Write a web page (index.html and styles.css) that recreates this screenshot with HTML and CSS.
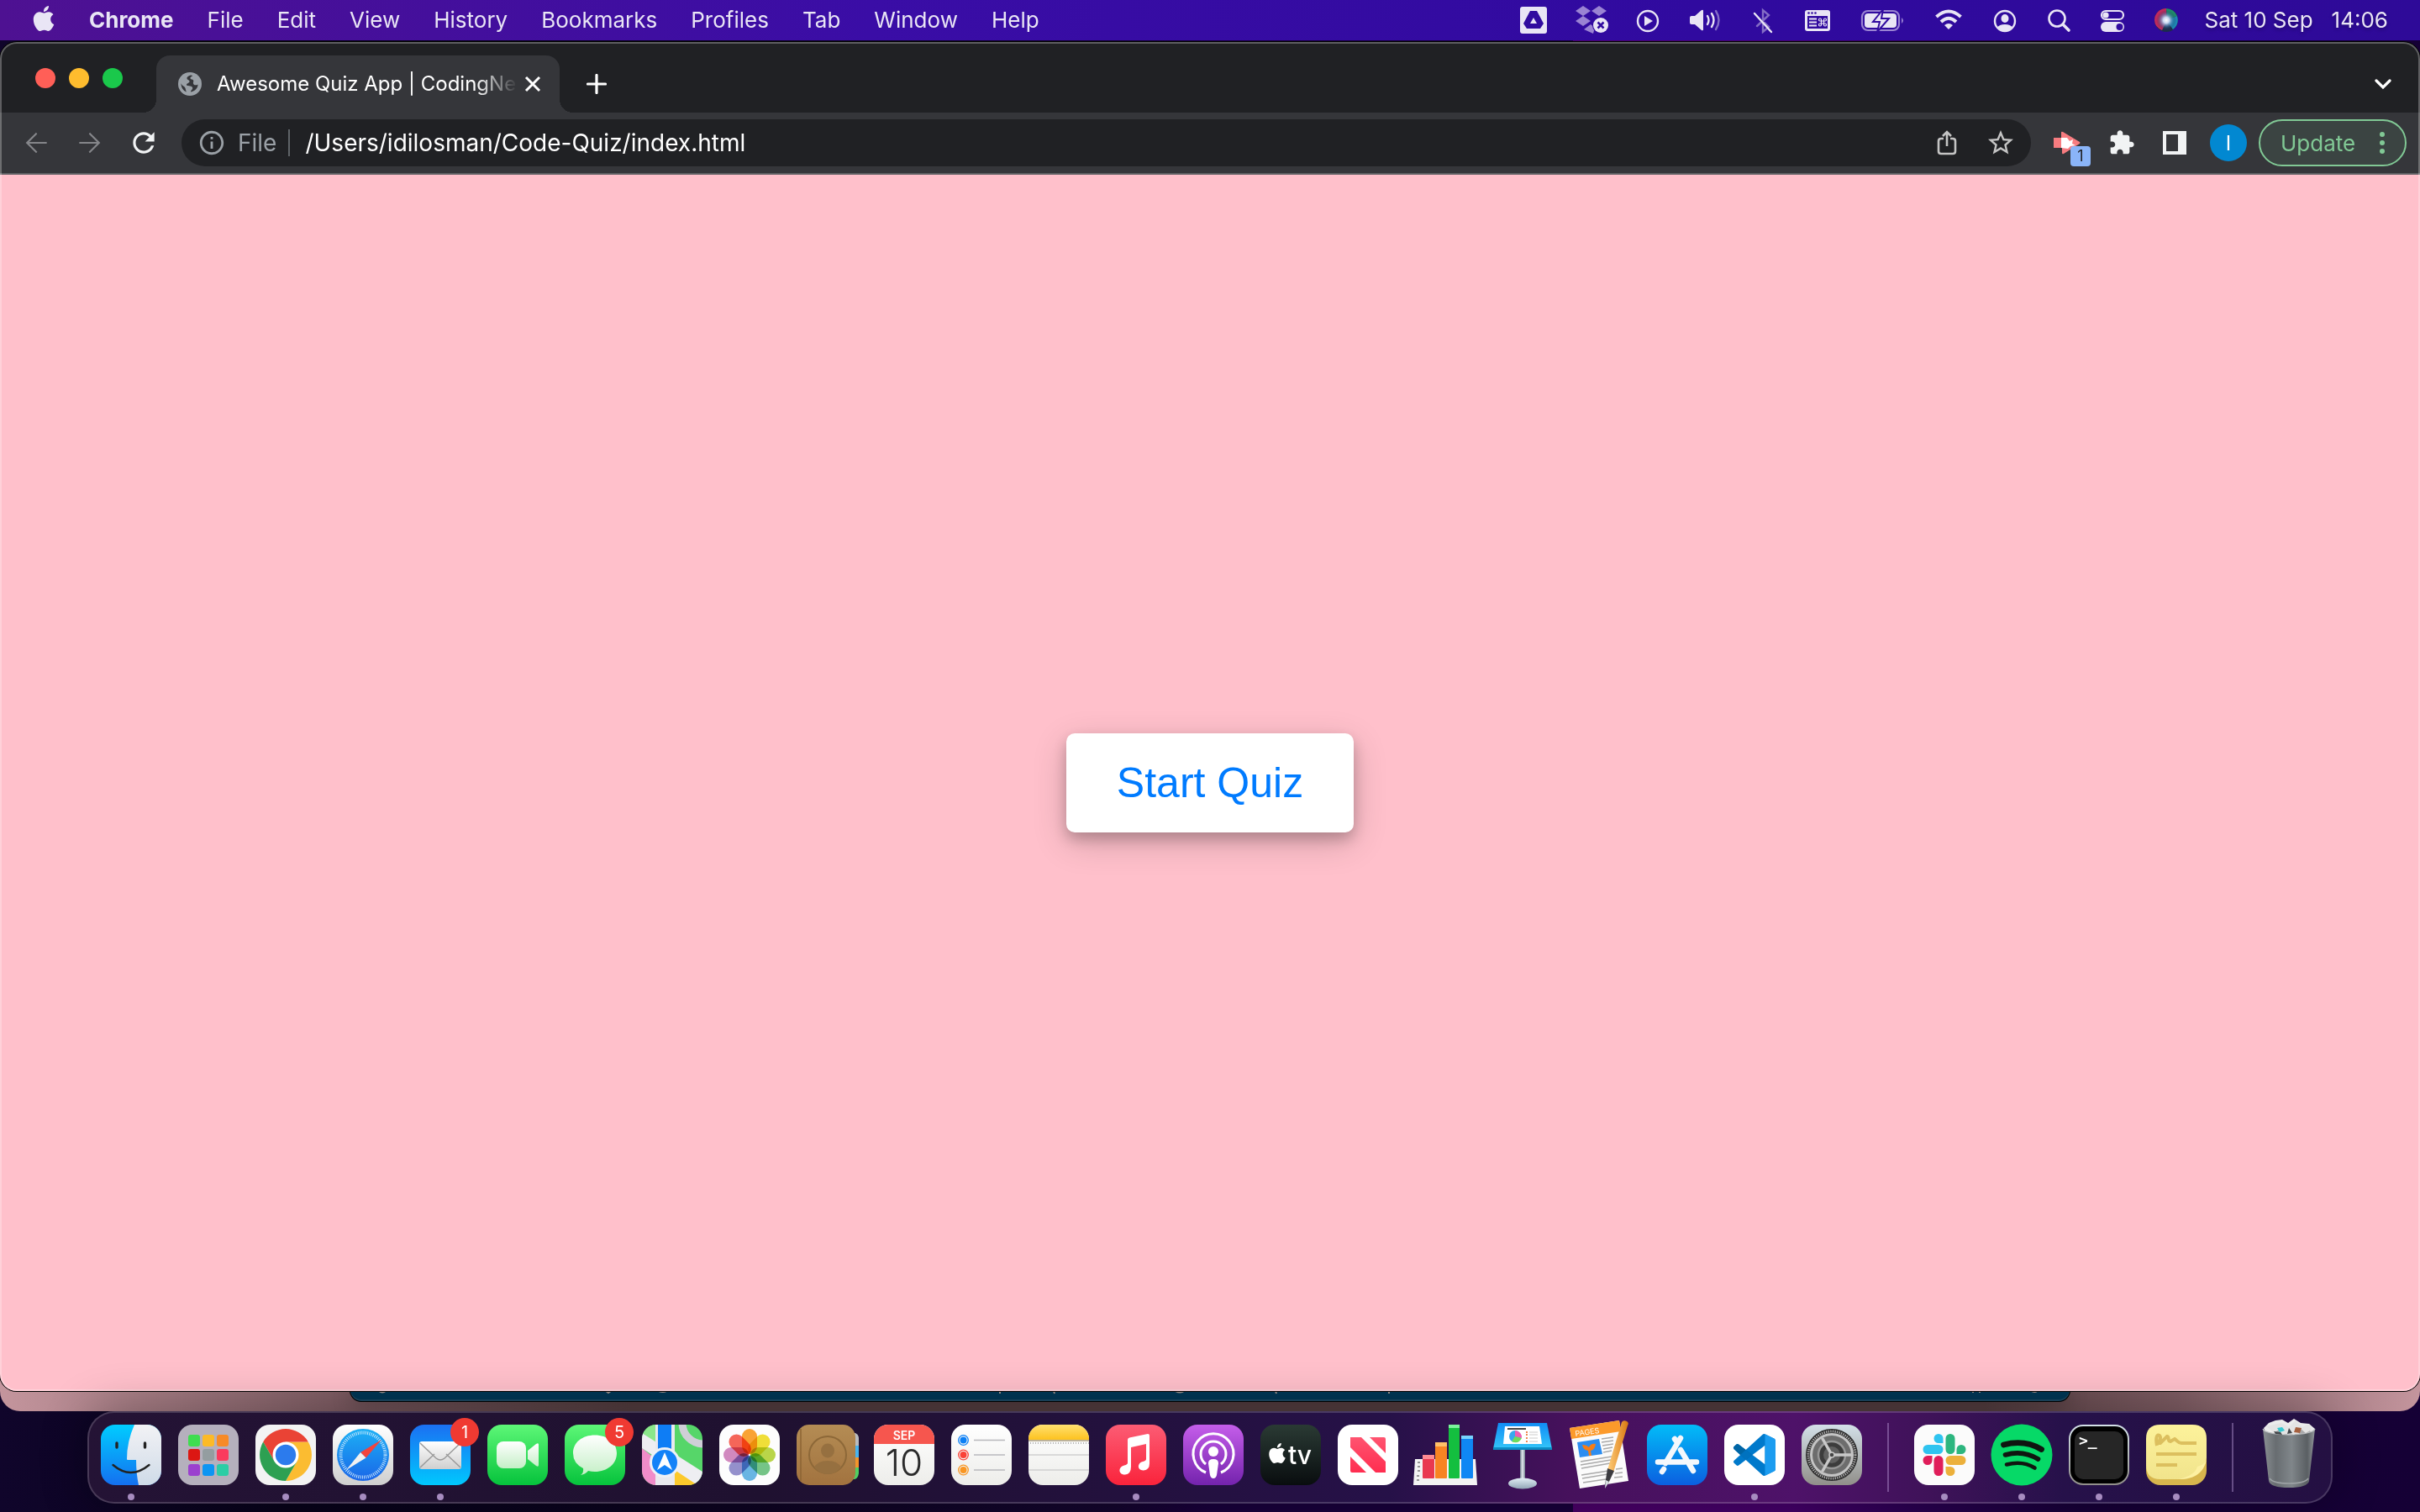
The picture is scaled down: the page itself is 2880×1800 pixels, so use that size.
FILE: index.html
```html
<!DOCTYPE html>
<html lang="en">
<head>
<meta charset="utf-8">
<title>Awesome Quiz App</title>
<link rel="stylesheet" href="styles.css">
</head>
<body>
<svg class="defs" aria-hidden="true">
  <defs>
    <linearGradient id="g-finder" x2="0" y2="1"><stop offset="0" stop-color="#00cdff"/><stop offset="1" stop-color="#1470f0"/></linearGradient>
    <linearGradient id="g-face" x2="0" y2="1"><stop offset="0" stop-color="#f2f2f5"/><stop offset="1" stop-color="#cfdbe8"/></linearGradient>
    <linearGradient id="g-white" x2="0" y2="1"><stop offset="0" stop-color="#ffffff"/><stop offset="1" stop-color="#ededea"/></linearGradient>
    <linearGradient id="g-silver" x2="0" y2="1"><stop offset="0" stop-color="#ffffff"/><stop offset="1" stop-color="#cfcfcf"/></linearGradient>
    <linearGradient id="g-safari" x2="0" y2="1"><stop offset="0" stop-color="#1cb0f5"/><stop offset="1" stop-color="#1a66e8"/></linearGradient>
    <linearGradient id="g-mail" x2="0" y2="1"><stop offset="0" stop-color="#1b70f2"/><stop offset="1" stop-color="#00c8fe"/></linearGradient>
    <linearGradient id="g-green" x2="0" y2="1"><stop offset="0" stop-color="#5df777"/><stop offset="1" stop-color="#06c33c"/></linearGradient>
    <linearGradient id="g-bubble" x2="0" y2="1"><stop offset="0" stop-color="#ffffff"/><stop offset="1" stop-color="#c4efc6"/></linearGradient>
    <linearGradient id="g-brown" x2="0" y2="1"><stop offset="0" stop-color="#b48c54"/><stop offset="1" stop-color="#a2733f"/></linearGradient>
    <linearGradient id="g-notes" x2="0" y2="1"><stop offset="0" stop-color="#ffe070"/><stop offset="1" stop-color="#fdc21f"/></linearGradient>
    <linearGradient id="g-music" x2="0" y2="1"><stop offset="0" stop-color="#fc5c74"/><stop offset="1" stop-color="#fa233b"/></linearGradient>
    <linearGradient id="g-pod" x2="0" y2="1"><stop offset="0" stop-color="#c55eea"/><stop offset="1" stop-color="#7423ad"/></linearGradient>
    <linearGradient id="g-tv" x2="0" y2="1"><stop offset="0" stop-color="#2a3a34"/><stop offset="1" stop-color="#090d0f"/></linearGradient>
    <linearGradient id="g-news" x2="0" y2="1"><stop offset="0" stop-color="#ff5470"/><stop offset="1" stop-color="#ff2d50"/></linearGradient>
    <linearGradient id="g-store" x2="0" y2="1"><stop offset="0" stop-color="#02bcf8"/><stop offset="1" stop-color="#0b5fe0"/></linearGradient>
    <linearGradient id="g-gear" x2="0" y2="1"><stop offset="0" stop-color="#d3e0e8"/><stop offset="1" stop-color="#918f8a"/></linearGradient>
    <linearGradient id="g-keynote" x2="0" y2="1"><stop offset="0" stop-color="#118df5"/><stop offset="1" stop-color="#34c6f9"/></linearGradient>
    <linearGradient id="g-metal"><stop offset="0" stop-color="#6f7f8c"/><stop offset=".5" stop-color="#e8edf1"/><stop offset="1" stop-color="#6f7f8c"/></linearGradient>
    <linearGradient id="g-base" x2="0" y2="1"><stop offset="0" stop-color="#e2eef5"/><stop offset="1" stop-color="#91a6b6"/></linearGradient>
    <linearGradient id="g-pen"><stop offset="0" stop-color="#ffce7a"/><stop offset="1" stop-color="#d97710"/></linearGradient>
    <linearGradient id="g-sticky" x2="0" y2="1"><stop offset="0" stop-color="#fdf29b"/><stop offset="1" stop-color="#f1e48c"/></linearGradient>
    <linearGradient id="g-can"><stop offset="0" stop-color="#8b9094"/><stop offset=".25" stop-color="#686d71"/><stop offset=".55" stop-color="#80868a"/><stop offset=".85" stop-color="#5a5f63"/><stop offset="1" stop-color="#93989c"/></linearGradient>
    <radialGradient id="g-siri" cx=".5" cy=".5" r=".5"><stop offset="0" stop-color="#ffffff"/><stop offset=".3" stop-color="#c9d6f0"/><stop offset=".65" stop-color="#4a7fb0" stop-opacity=".5"/><stop offset="1" stop-color="#123" stop-opacity="0"/></radialGradient>
    <clipPath id="tile"><rect width="72" height="72" rx="17"/></clipPath>
    <path id="apple" d="M12.152 6.896c-.948 0-2.415-1.078-3.96-1.04-2.04.027-3.91 1.183-4.961 3.014-2.117 3.675-.546 9.103 1.519 12.09 1.013 1.454 2.208 3.09 3.792 3.039 1.52-.065 2.09-.987 3.935-.987 1.831 0 2.35.987 3.96.948 1.637-.026 2.676-1.48 3.676-2.948 1.156-1.688 1.636-3.325 1.662-3.415-.039-.013-3.182-1.221-3.22-4.857-.026-3.04 2.48-4.494 2.597-4.559-1.429-2.09-3.623-2.324-4.39-2.376-2-.156-3.675 1.09-4.61 1.09zM15.53 3.83c.843-1.012 1.4-2.427 1.245-3.83-1.207.052-2.662.805-3.532 1.818-.78.896-1.454 2.338-1.273 3.714 1.338.104 2.715-.688 3.559-1.701"/>
  </defs>
</svg>

<header class="menubar">
  <nav class="menus" aria-label="Menu bar">
    <button class="menu apple" aria-label="Apple"><svg width="28" height="30" viewBox="0 0 24 24" fill="currentColor" preserveAspectRatio="xMidYMid slice"><use href="#apple"/></svg></button>
    <button class="menu app-name">Chrome</button>
    <button class="menu">File</button>
    <button class="menu">Edit</button>
    <button class="menu">View</button>
    <button class="menu">History</button>
    <button class="menu">Bookmarks</button>
    <button class="menu">Profiles</button>
    <button class="menu">Tab</button>
    <button class="menu">Window</button>
    <button class="menu">Help</button>
  </nav>
  <div class="status">
    <svg width="36" height="32" viewBox="0 0 36 32"><rect x="2" width="32" height="32" rx="3" fill="#e9e5f5"/><path d="M14 5h8l8 15-4 6H10l-4-6z" fill="#310b9f"/><path d="M18 13l4 7h-8z" fill="#e9e5f5"/></svg>
    <svg width="42" height="34" viewBox="0 0 42 34"><g fill="#9a83d3"><path d="M11 0l9 6-9 6-9-6zM30 0l9 6-9 6-9-6zM11 12l9 6-9 6-9-6zM12 28l8-6 5 4-2 7z"/></g><circle cx="32" cy="23" r="10" fill="#310b9f"/><circle cx="32" cy="23" r="9" fill="#e9e5f5"/><path d="M28.500 19.500l7 7m0-7l-7 7" stroke="#310b9f" stroke-width="2.500"/></svg>
    <svg width="32" height="32" viewBox="0 0 32 32"><circle cx="16" cy="17" r="12" fill="none" stroke="currentColor" stroke-width="2.400"/><path d="M12 11l10 6-10 6z" fill="currentColor"/></svg>
    <svg width="44" height="32" viewBox="0 0 44 32" fill="none" stroke="currentColor" stroke-width="2.400" stroke-linecap="round"><path d="M4 13q0-2 2-2h4l8-7q2-1 2 1v22q0 2-2 1l-8-7H6q-2 0-2-2z" fill="currentColor" stroke="none"/><path d="M25 11q3 5 0 10M30 8q5 8 0 16"/><path d="M35 5q7 11 0 22" opacity=".45"/></svg>
    <svg width="34" height="32" viewBox="0 0 34 32" fill="none" stroke="currentColor" stroke-width="2.400" stroke-linecap="round"><path d="M10 23l14-13-7-6v26l7-6-5-5" opacity=".45"/><path d="M7 8l20 22"/></svg>
    <svg width="36" height="32" viewBox="0 0 36 32"><rect x="3" y="4" width="30" height="25" rx="3" fill="#e9e5f5"/><path d="M6 11h24v15H6z" fill="#310b9f"/><g fill="#310b9f"><circle cx="7.500" cy="7.500" r="1.300"/><circle cx="11.500" cy="7.500" r="1.300"/><circle cx="15.500" cy="7.500" r="1.300"/></g><path d="M8 14.500h9M8 18.500h9M8 22.500h9" stroke="#e9e5f5" stroke-width="1.800"/><path d="M22.500 17h3v3h-3zM22.500 17h-1.500a1.500 1.500 0 1 1 1.500-1.500zM25.500 17v-1.500a1.500 1.500 0 1 1 1.500 1.500zM22.500 20v1.500a1.500 1.500 0 1 1-1.500-1.500zM25.500 20h1.500a1.500 1.500 0 1 1-1.500 1.500z" fill="none" stroke="#e9e5f5" stroke-width="1.200"/></svg>
    <svg width="60" height="32" viewBox="0 0 60 32"><rect x="5" y="5" width="44" height="23" rx="7" fill="none" stroke="#9a83d3" stroke-width="2.200"/><path d="M52 13q4 3.500 0 7z" fill="#9a83d3"/><rect x="8" y="8" width="38" height="17" rx="4" fill="#e9e5f5"/><path d="M30 3L18 18h8l-3 12 14-16h-9z" fill="#e9e5f5" stroke="#310b9f" stroke-width="2"/></svg>
    <svg width="36" height="32" viewBox="0 0 36 32" fill="none" stroke="currentColor" stroke-width="4"><path d="M3.500 12q14.500-13 29 0M9 18q9-8.500 18 0"/><path d="M18 27l-5-5q5-4 10 0z" fill="currentColor" stroke="none"/></svg>
    <svg width="38" height="32" viewBox="0 0 38 32" fill="currentColor"><circle cx="19" cy="17" r="12" fill="none" stroke="currentColor" stroke-width="2.400"/><ellipse cx="19" cy="14" rx="4.500" ry="5"/><path d="M10 25q2-4 9-4t9 4q-9 7-18 0z"/></svg>
    <svg width="30" height="32" viewBox="0 0 30 32" fill="none" stroke="currentColor" stroke-linecap="round"><circle cx="13" cy="14" r="9.500" stroke-width="2.600"/><path d="M20 21l7 7" stroke-width="3.600"/></svg>
    <svg width="38" height="32" viewBox="0 0 38 32"><rect x="6" y="5" width="26" height="10" rx="5" fill="none" stroke="currentColor" stroke-width="2.200"/><circle cx="11" cy="10" r="3.600" fill="currentColor"/><rect x="5" y="18" width="28" height="12" rx="6" fill="currentColor"/><circle cx="27.500" cy="24" r="4" fill="#310b9f"/></svg>
    <svg width="30" height="32" viewBox="0 0 30 32"><circle cx="15" cy="16" r="14" fill="#1c2c4c"/><path d="M1 16A14 14 0 0 1 15 2l1 14-6 12Q1 24 1 16z" fill="#c02a5e"/><path d="M15 2a14 14 0 0 1 13 9l-12 5z" fill="#1f8a6b"/><path d="M28 11q3 10-5 16l-8-11z" fill="#1d87b4"/><circle cx="15" cy="16" r="12" fill="url(#g-siri)"/></svg>
    <time class="clock"><span>Sat 10 Sep</span><span>14:06</span></time>
  </div>
</header>

<main class="desktop">
  <div class="back-window"></div>
  <div class="editor-window">
    <svg width="2046" height="12" viewBox="0 0 2046 12" fill="none" stroke="#9a8f8a" stroke-width="2"><path d="M34 0q4 3 8 0M304 0l3 2 3-2M308 0M367 0q5 2 9 0M773 0v3M837 0l1 3M982 0q6 3 10 0M1101 0l1 3M1236 0v3M1641 0h4M1931 0v2M1939 0v2M2001 0q4 2 6 0"/></svg>
  </div>

  <section class="browser">
    <div class="tabstrip">
      <div class="lights">
        <button class="light close" aria-label="Close window"></button>
        <button class="light minimise" aria-label="Minimise window"></button>
        <button class="light zoom" aria-label="Zoom window"></button>
      </div>
      <div class="tab">
        <svg width="28" height="28" viewBox="0 0 28 28"><circle cx="14" cy="14" r="14" fill="#9aa0a6"/><path d="M15 3.500c-3 1-5 2-4.500 4s3 1.500 3 3.500-3.500 2-3.500 4 6 .5 7 3-2 3-2 5.500c5-1 8.500-4.500 8.500-9-2 1.500-5 1-5.500-1s1-2.500 0-4-3.500-.5-3.500-2.500 2.500-1.500 2.500-3zM3.500 12.500c0 3 3 3.500 4.500 5.500s.5 3.500 2 5.500C6 22 3.200 18 3.500 12.500z" fill="#35363a"/></svg>
        <span class="tab-title">Awesome Quiz App | CodingNe</span>
        <button class="icon-button" aria-label="Close tab"><svg width="20" height="20" viewBox="0 0 20 20" stroke="#fff" stroke-width="3"><path d="M2 2l16 16M18 2L2 18"/></svg></button>
      </div>
      <button class="icon-button new-tab" aria-label="New tab"><svg width="24" height="24" viewBox="0 0 24 24" stroke="#fff" stroke-width="3.200" stroke-linecap="round"><path d="M12 1.500v21M1.500 12h21"/></svg></button>
      <button class="icon-button tab-search" aria-label="Search tabs"><svg width="20" height="14" viewBox="0 0 20 14" fill="none" stroke="#fff" stroke-width="3.200" stroke-linecap="round"><path d="M2 3l8 8 8-8"/></svg></button>
    </div>

    <div class="toolbar">
      <div class="nav-buttons">
        <button class="icon-button dim" aria-label="Back"><svg width="38" height="38" viewBox="0 0 24 24" fill="currentColor"><path d="M20 11.300H6.800l6-6L12 4.200 4.200 12l7.800 7.800.9-1-6.100-6.100H20z"/></svg></button>
        <button class="icon-button dim" aria-label="Forward"><svg width="38" height="38" viewBox="0 0 24 24" fill="currentColor"><path d="M4 11.300h13.200l-6-6 .8-1.100 7.800 7.800-7.800 7.800-.9-1 6.100-6.100H4z"/></svg></button>
        <button class="icon-button" aria-label="Reload"><svg width="38" height="38" viewBox="0 0 24 24" fill="currentColor"><path d="M17.650 6.350C16.200 4.900 14.210 4 12 4c-4.420 0-7.990 3.580-7.990 8s3.570 8 7.990 8c3.730 0 6.840-2.550 7.730-6h-2.080c-.82 2.330-3.040 4-5.650 4-3.310 0-6-2.690-6-6s2.690-6 6-6c1.660 0 3.140.69 4.220 1.780L13 11h7V4l-2.350 2.350z"/></svg></button>
      </div>
      <form class="omnibox">
        <svg width="34" height="34" viewBox="0 0 24 24" fill="#9aa0a6"><path d="M11 17h2v-6h-2v6zm1-15C6.480 2 2 6.480 2 12s4.480 10 10 10 10-4.480 10-10S17.520 2 12 2zm0 18c-4.410 0-8-3.590-8-8s3.590-8 8-8 8 3.590 8 8-3.590 8-8 8zM11 9h2V7h-2v2z"/></svg>
        <label class="scheme" for="url">File</label>
        <input class="url" id="url" type="text" value="/Users/idilosman/Code-Quiz/index.html">
        <button type="button" class="icon-button soft" aria-label="Share"><svg width="28" height="32" viewBox="0 0 28 32" fill="none" stroke="currentColor" stroke-width="2.600"><path d="M10 11H7q-3 0-3 3v12q0 3 3 3h14q3 0 3-3V14q0-3-3-3h-3M14 20V3M9 8l5-5 5 5"/></svg></button>
        <button type="button" class="icon-button soft" aria-label="Bookmark"><svg width="36" height="36" viewBox="0 0 24 24" fill="currentColor"><path d="M22 9.240l-7.190-.62L12 2 9.190 8.630 2 9.240l5.460 4.730L5.820 21 12 17.270 18.180 21l-1.630-7.030L22 9.240zM12 15.400l-3.760 2.270 1-4.280-3.320-2.880 4.380-.38L12 6.100l1.710 4.040 4.380.38-3.320 2.880 1 4.280L12 15.400z"/></svg></button>
      </form>
      <div class="extensions">
        <button class="icon-button extension" aria-label="Extension"><svg width="32" height="28" viewBox="0 0 32 28"><path d="M0 8h9V2q0-2 2-1l20 12q1 1 0 2L12 27q-2 1-2-1v-6H0z" fill="#f77c80"/><path d="M9 8h7l3 4 4-2-1 5 4 2-6 1-3 3-8-1z" fill="#fff"/></svg><span class="ext-count">1</span></button>
        <button class="icon-button" aria-label="Extensions"><svg width="32" height="32" viewBox="0 0 24 24" fill="currentColor"><path d="M20.500 11H19V7c0-1.100-.9-2-2-2h-4V3.500C13 2.120 11.880 1 10.500 1S8 2.120 8 3.500V5H4c-1.100 0-1.990.9-1.990 2v3.800H3.500c1.490 0 2.700 1.210 2.700 2.700s-1.210 2.700-2.700 2.700H2V20c0 1.100.9 2 2 2h3.800v-1.500c0-1.490 1.210-2.700 2.700-2.700 1.490 0 2.700 1.210 2.700 2.700V22H17c1.100 0 2-.9 2-2v-4h1.500c1.380 0 2.500-1.120 2.500-2.500S21.880 11 20.500 11z"/></svg></button>
        <button class="icon-button" aria-label="Side panel"><svg width="28" height="28" viewBox="0 0 28 28" fill="currentColor"><path fill-rule="evenodd" d="M0 0h28v28H0zM4 4v20h14V4z"/></svg></button>
      </div>
      <button class="avatar" aria-label="Profile">I</button>
      <button class="update">Update<svg width="6" height="28" viewBox="0 0 6 28" fill="currentColor"><circle cx="3" cy="4" r="3"/><circle cx="3" cy="14" r="3"/><circle cx="3" cy="24" r="3"/></svg></button>
    </div>

    <div class="page">
      <button class="start">Start Quiz</button>
    </div>
  </section>
</main>

<footer class="dock-area">
  <nav class="dock" aria-label="Dock">
    <a class="app running" href="#" aria-label="Finder"><svg viewBox="0 0 72 72"><g clip-path="url(#tile)"><rect width="72" height="72" fill="url(#g-finder)"/><path d="M40 0q-9 20-9 41q0 1 1 1h10q0 16 3 30h27V0z" fill="url(#g-face)"/></g><path d="M19 22v5M52.500 22v5" stroke="#222" stroke-width="3.400" stroke-linecap="round"/><path d="M14.500 48q21 18 43 0" fill="none" stroke="#222" stroke-width="2.400" stroke-linecap="round"/></svg></a>
    <a class="app" href="#" aria-label="Launchpad"><svg viewBox="0 0 72 72"><rect width="72" height="72" rx="17" fill="#b5b0bd"/><rect x="12" y="12" width="14" height="14" rx="3" fill="#3fdd50"/><rect x="29" y="12" width="14" height="14" rx="3" fill="#fcba28"/><rect x="46" y="12" width="14" height="14" rx="3" fill="#f78a26"/><rect x="12" y="29" width="14" height="14" rx="3" fill="#dc1713"/><rect x="29" y="29" width="14" height="14" rx="3" fill="#949da0"/><rect x="46" y="29" width="14" height="14" rx="3" fill="#fb3a5d"/><rect x="12" y="47" width="14" height="14" rx="3" fill="#9b40cf"/><rect x="29" y="47" width="14" height="14" rx="3" fill="#0d95f3"/><rect x="46" y="47" width="14" height="14" rx="3" fill="#2ccda5"/></svg></a>
    <a class="app running" href="#" aria-label="Chrome"><svg viewBox="0 0 72 72"><rect width="72" height="72" rx="17" fill="#f3f3f3"/><path d="M36 67A31 31 0 0 0 62.800 20.500H36L49.400 43.700z" fill="#fbbc31"/><path d="M22.600 43.700L9.200 20.500A31 31 0 0 1 62.800 20.500H36z" fill="#ea4335"/><path d="M9.200 20.500A31 31 0 0 0 36 67L49.400 43.700H22.600z" fill="#2da052"/><circle cx="36" cy="36" r="15.500" fill="#fff"/><circle cx="36" cy="36" r="12.200" fill="#2c7bed"/></svg></a>
    <a class="app running" href="#" aria-label="Safari"><svg viewBox="0 0 72 72"><rect width="72" height="72" rx="17" fill="url(#g-silver)"/><circle cx="36" cy="36" r="31" fill="url(#g-safari)"/><circle cx="36" cy="36" r="26.500" fill="none" stroke="#d5eefd" stroke-width="4" stroke-dasharray=".9 1.410"/><path d="M58 18L39.500 39.500 33 33z" fill="#f2433d"/><path d="M16 54L33 33l6.500 6.500z" fill="#f1f1f1"/></svg></a>
    <a class="app running" href="#" aria-label="Mail"><svg viewBox="0 0 72 72"><rect width="72" height="72" rx="17" fill="url(#g-mail)"/><rect x="11" y="20" width="50" height="33" rx="3" fill="url(#g-silver)"/><path d="M12 51l17-16M60 51L43 35M12 22l19 18q5 4 10 0l19-18" fill="none" stroke="#9a9a9a" stroke-width="1.500"/></svg><span class="badge">1</span></a>
    <a class="app" href="#" aria-label="FaceTime"><svg viewBox="0 0 72 72"><rect width="72" height="72" rx="17" fill="url(#g-green)"/><rect x="11" y="20" width="35" height="32" rx="8" fill="url(#g-bubble)"/><path d="M48 31l10-8q3-2 3 1v24q0 3-3 1l-10-8z" fill="url(#g-bubble)"/></svg></a>
    <a class="app" href="#" aria-label="Messages"><svg viewBox="0 0 72 72"><rect width="72" height="72" rx="17" fill="url(#g-green)"/><path d="M36 12.500c15 0 26 9 26 21.500S51 56 36 56q-4 0-8-1-3 4-9 5 4-3 3-8-12-6-12-18C10 21 21 12.500 36 12.500z" fill="url(#g-bubble)"/></svg><span class="badge">5</span></a>
    <a class="app" href="#" aria-label="Maps"><svg viewBox="0 0 72 72"><g clip-path="url(#tile)"><rect width="72" height="72" fill="#56d669"/><path d="M0 10l17 12V0H0z" fill="#8be78b"/><path d="M0 28l20 16v28H0z" fill="#f08cc9"/><path d="M36 50l34 22H38z" fill="#fcc92c"/><path d="M0 10l72 46v16h-6L0 28z" fill="#eeeef2"/><circle cx="73" cy="-2" r="25" fill="none" stroke="#cfcfd7" stroke-width="9"/><path d="M16 0h23v72H16z" fill="#e9e9ee"/><path d="M19 0h16v45H19z" fill="#0e7df5"/></g><circle cx="27" cy="45" r="18" fill="#eef1f6"/><circle cx="27" cy="45" r="15" fill="#1382f8"/><path d="M27 33l9 21-9-6-9 6z" fill="#fff"/></svg></a>
    <a class="app" href="#" aria-label="Photos"><svg viewBox="0 0 72 72"><rect width="72" height="72" rx="17" fill="#fdfdfd"/><g class="petals"><rect x="27" y="5" width="18" height="30" rx="9" fill="#fb9a1d"/><rect x="27" y="5" width="18" height="30" rx="9" fill="#f1dd22" transform="rotate(45 36 36)"/><rect x="27" y="5" width="18" height="30" rx="9" fill="#b4d335" transform="rotate(90 36 36)"/><rect x="27" y="5" width="18" height="30" rx="9" fill="#67c07b" transform="rotate(135 36 36)"/><rect x="27" y="5" width="18" height="30" rx="9" fill="#5aafe3" transform="rotate(180 36 36)"/><rect x="27" y="5" width="18" height="30" rx="9" fill="#8a85c9" transform="rotate(225 36 36)"/><rect x="27" y="5" width="18" height="30" rx="9" fill="#ce7dba" transform="rotate(270 36 36)"/><rect x="27" y="5" width="18" height="30" rx="9" fill="#f75648" transform="rotate(315 36 36)"/></g></svg></a>
    <a class="app" href="#" aria-label="Contacts"><svg viewBox="0 0 72 72"><path d="M64 10h6q4 2 4 6v14H64z" fill="#b9bcc0"/><path d="M64 25h10v14H64z" fill="#48b4ee"/><path d="M64 39h10v12H64z" fill="#f3952b"/><path d="M64 51h10v7q-1 6-5 7h-5z" fill="#50cf62"/><rect width="70" height="72" rx="15" fill="url(#g-brown)"/><path d="M5 5v62" stroke="#8d6535" stroke-width="1.500"/><g fill="#967040"><circle cx="37" cy="36" r="22" fill="none" stroke="#8d6838" stroke-width="2"/><ellipse cx="37" cy="31" rx="8" ry="8.500"/><path d="M21 51q4-8 16-8t16 8q-7 8-16 8t-16-8z"/></g></svg></a>
    <a class="app" href="#" aria-label="Calendar"><svg viewBox="0 0 72 72"><g clip-path="url(#tile)"><rect width="72" height="72" fill="url(#g-white)"/><rect width="72" height="23" fill="#f6564e"/></g><text class="cal-month" x="36" y="18">SEP</text><text class="cal-day" x="36" y="61">10</text></svg></a>
    <a class="app" href="#" aria-label="Reminders"><svg viewBox="0 0 72 72"><rect width="72" height="72" rx="17" fill="url(#g-white)"/><path d="M27 18.500h37M27 36h37M27 54h37" stroke="#b9b9bd" stroke-width="1.500"/><g stroke-width="1.300" fill="none"><circle cx="14.500" cy="18.500" r="5.800" stroke="#0b7ff5"/><circle cx="14.500" cy="36" r="5.800" stroke="#fa4238"/><circle cx="14.500" cy="54" r="5.800" stroke="#f99622"/></g><circle cx="14.500" cy="18.500" r="4" fill="#0b7ff5"/><circle cx="14.500" cy="36" r="4" fill="#fa4238"/><circle cx="14.500" cy="54" r="4" fill="#f99622"/></svg></a>
    <a class="app" href="#" aria-label="Notes"><svg viewBox="0 0 72 72"><g clip-path="url(#tile)"><rect width="72" height="72" fill="url(#g-white)"/><rect width="72" height="18" fill="url(#g-notes)"/><path d="M0 19h72" stroke="#a89a78" stroke-width="1.500"/><path d="M2 22h70" stroke="#b5b5b5" stroke-width="2" stroke-dasharray="1 2"/><path d="M0 36h72M0 54h72" stroke="#cfcfcf" stroke-width="1.500"/></g></svg></a>
    <a class="app running" href="#" aria-label="Music"><svg viewBox="0 0 72 72"><rect width="72" height="72" rx="17" fill="url(#g-music)"/><path d="M26 18q0-2 2-2.500L50 11q2 0 2 2v33q0 8-7 8.500c-8 .5-8-9-1-10.500q4-1 4-3V23l-18 4v23q0 9-7 9.500c-8 .5-9-9-1-11q4-1 4-3z" fill="#fff"/></svg></a>
    <a class="app" href="#" aria-label="Podcasts"><svg viewBox="0 0 72 72"><rect width="72" height="72" rx="17" fill="url(#g-pod)"/><g fill="none" stroke="#fff" stroke-width="3"><path d="M27 57A24 24 0 1 1 45 57"/><path d="M27 47A15 15 0 1 1 45 47"/></g><circle cx="36" cy="32" r="6" fill="#fff"/><path d="M36 41q6 0 6 5l-2 14q-1 4-4 4t-4-4l-2-14q0-5 6-5z" fill="#fff"/></svg></a>
    <a class="app" href="#" aria-label="TV"><svg viewBox="0 0 72 72"><rect width="72" height="72" rx="17" fill="url(#g-tv)"/><g transform="translate(8 22)" fill="#fff"><use href="#apple" width="24" height="24"/></g><text class="tv" x="33" y="47">tv</text></svg></a>
    <a class="app" href="#" aria-label="News"><svg viewBox="0 0 72 72"><rect width="72" height="72" rx="17" fill="#fff"/><path d="M15 15h13l29 29v13H45L15 27zM38 15h17q2 0 2 2v17zM15 38l19 19H17q-2 0-2-2z" fill="url(#g-news)"/></svg></a>
    <a class="app" href="#" aria-label="Numbers"><svg viewBox="0 0 72 72"><path d="M0 41h72l2 31H-2z" fill="#f3f3f3"/><path d="M3 45h3M3 50h3M3 55h3M2 61h3M2 66h3" stroke="#777" stroke-width="1.500"/><rect x="9" y="36" width="14" height="28" rx="1" fill="#e93950"/><rect x="9" y="36" width="14" height="5" fill="#ff8a92"/><rect x="24" y="21" width="14" height="43" rx="1" fill="#f88423"/><rect x="24" y="21" width="14" height="5" fill="#ffc069"/><rect x="40" y="0" width="13" height="64" rx="1" fill="#14bf3f"/><rect x="40" y="0" width="13" height="4" fill="#7cf29c"/><rect x="55" y="13" width="14" height="51" rx="1" fill="#0f87f4"/><rect x="55" y="13" width="14" height="4" fill="#78d3fc"/></svg></a>
    <a class="app" href="#" aria-label="Keynote"><svg viewBox="0 0 72 72"><rect x="33" y="28" width="6" height="42" fill="url(#g-metal)"/><ellipse cx="36" cy="70" rx="17" ry="6.500" fill="url(#g-base)"/><path d="M7-2h58l6 31H1z" fill="url(#g-keynote)"/><path d="M1 27h70v3H1z" fill="#0c8cc4"/><path d="M15 2h41l3 21H13z" fill="#fff"/><path d="M18 5h22" stroke="#444" stroke-width="2"/><circle cx="27" cy="14" r="7" fill="#37a8ee"/><path d="M27 14V7a8 8 0 0 1 8 9z" fill="#ef5db1"/><path d="M27 14l8 2q-4 8-12 4z" fill="#6fdc5d"/><path d="M40 9h2M40 12h2M40 16h2M40 20h2" stroke="#e85" stroke-width="2"/><path d="M44 9h10M44 12h10M44 16h10M44 20h10" stroke="#ccc" stroke-width="1"/></svg></a>
    <a class="app" href="#" aria-label="Pages"><svg viewBox="0 0 72 72"><path d="M0 4L59-5l11 82-58 9z" fill="none"/><path d="M0 4L59-5l11 82-1-4-57 4z" fill="none"/><path d="M0 4L59-5l11 72-58 9z" fill="#fbfbfb"/><path d="M0 4L59-5l2 13L2 17z" fill="#fc9a2b"/><text class="pages" x="7" y="14" transform="rotate(-8 7 14)">PAGES</text><path d="M9 21l26-4 4 18-27 4z" fill="#2c8df0"/><path d="M15 24q5 0 8 3 2-5 8-4-1 7-6 8l1 6h-3l-1-6q-6-1-7-7z" fill="#f67d16"/><path d="M38 17l14-2M38 21l14-2M39 25l13-2M40 29l11-2M40 33l10-2M13 44l37-6M13 48l36-6M14 52l34-6M14 60l32-5M15 64l30-5M16 69l27-4M55 53l8-1M54 58l9-1M53 63l10-1" stroke="#aaa" stroke-width="1.400"/><path d="M62-3q2-3 6-1 3 2 1 5L52 57l-7-3z" fill="url(#g-pen)"/><path d="M45 52l8 3-7 15-4 2z" fill="#3c3c40"/><path d="M43 66l4 2-5 8z" fill="#d6dde2"/></svg></a>
    <a class="app" href="#" aria-label="App Store"><svg viewBox="0 0 72 72"><rect width="72" height="72" rx="17" fill="url(#g-store)"/><g stroke="#f4f8fc" stroke-width="6.500" stroke-linecap="round"><path d="M40 16L22 46M33 17l3 4M40 30l15 25M13 44.500h32M52 44.500h7M20 53l-2 3"/></g></svg></a>
    <a class="app running" href="#" aria-label="Visual Studio Code"><svg viewBox="0 0 72 72"><rect width="72" height="72" rx="17" fill="#fff"/><g transform="translate(11 11) scale(2.083)"><path d="M23.150 2.587L18.210.21a1.494 1.494 0 0 0-1.705.29l-9.460 8.630-4.120-3.128a.999.999 0 0 0-1.276.057L.327 7.261A1 1 0 0 0 .326 8.740L3.899 12 .326 15.260a1 1 0 0 0 .001 1.479L1.650 17.940a.999.999 0 0 0 1.276.057l4.120-3.128 9.460 8.630a1.492 1.492 0 0 0 1.704.29l4.942-2.377A1.500 1.500 0 0 0 24 20.060V3.939a1.500 1.500 0 0 0-.85-1.352zm-5.146 14.861L10.826 12l7.178-5.448v10.896z" fill="#0079cb"/><path d="M.326 8.740a1 1 0 0 1 0-1.479L1.650 6.060a1 1 0 0 1 1.276-.058L7.045 9.130 10.826 12l-3.780 2.870L3.900 12z" fill="#0065a5"/><path d="M3.900 12L7.045 9.130 10.826 12l-3.780 2.870z" fill="#0072bf"/><path d="M18 .1l5.150 2.487q.85.500.85 1.350V20.060q0 .9-.85 1.350L18 23.900z" fill="#1b9cf0"/></g></svg></a>
    <a class="app" href="#" aria-label="System Preferences"><svg viewBox="0 0 72 72"><rect width="72" height="72" rx="17" fill="url(#g-gear)"/><circle cx="36" cy="36" r="31" fill="#2d2d2d"/><circle cx="36" cy="36" r="28" fill="none" stroke="#aaa" stroke-width="3" stroke-dasharray="1.300 1.300"/><circle cx="36" cy="36" r="24.500" fill="#6d6d6d" stroke="#c4c4c4" stroke-width="3"/><circle cx="36" cy="36" r="16" fill="#3c3c3c" stroke="#979797" stroke-width="2.500"/><circle cx="36" cy="36" r="10" fill="#606060"/><path d="M36 36h23M36 36L24.500 16M36 36L24.500 56" stroke="#c8c8c8" stroke-width="3.500"/><circle cx="36" cy="36" r="3" fill="#444" stroke="#c8c8c8" stroke-width="1.500"/></svg></a>
    <span class="divider"></span>
    <a class="app running" href="#" aria-label="Slack"><svg viewBox="0 0 72 72"><rect width="72" height="72" rx="17" fill="#fbfbfb"/><path d="M29 11a5.500 5.500 0 0 1 5.500 5.500V22H29a5.500 5.500 0 0 1 0-11zM16 24h13a5.500 5.500 0 0 1 0 11H16a5.500 5.500 0 0 1 0-11z" fill="#2fc4f0"/><path d="M43 11a5.500 5.500 0 0 1 5.500 5.500v13a5.500 5.500 0 0 1-11 0v-13A5.500 5.500 0 0 1 43 11zM56 24a5.500 5.500 0 0 1 0 11h-5.500v-5.500A5.500 5.500 0 0 1 56 24z" fill="#2db67f"/><path d="M43 37h13a5.500 5.500 0 0 1 0 11H43a5.500 5.500 0 0 1 0-11zM37.500 50H43a5.500 5.500 0 1 1-5.500 5.500z" fill="#ecb03b"/><path d="M16 37h5.500v5.500A5.500 5.500 0 1 1 16 37zM29 37a5.500 5.500 0 0 1 5.500 5.500v13a5.500 5.500 0 0 1-11 0v-13A5.500 5.500 0 0 1 29 37z" fill="#e01e5a"/></svg></a>
    <a class="app running" href="#" aria-label="Spotify"><svg viewBox="0 0 72 72"><circle cx="36" cy="36" r="36.500" fill="#06d967"/><g fill="none" stroke="#101510" stroke-linecap="round"><path d="M14.500 24q25-6.500 45 5.500" stroke-width="6.800"/><path d="M16.500 36q21-6 39 5" stroke-width="5.600"/><path d="M18 47.500q19-5 33.500 4" stroke-width="4.600"/></g></svg></a>
    <a class="app running" href="#" aria-label="Terminal"><svg viewBox="0 0 72 72"><rect width="72" height="72" rx="17" fill="url(#g-gear)"/><rect x="2" y="2" width="68" height="68" rx="15" fill="#000"/><rect x="7" y="8" width="58" height="57" rx="10" fill="#262626"/><text class="prompt" x="12" y="25">&gt;_</text></svg></a>
    <a class="app running" href="#" aria-label="Stickies"><svg viewBox="0 0 72 72"><rect y="8" width="72" height="64" rx="17" fill="#d7b64d"/><path d="M17 0h38q17 0 17 17v22q-3 25-30 26H17Q0 65 0 48V17Q0 0 17 0z" fill="url(#g-sticky)"/><path d="M72 42q-5 23-34 23 20-4 23-15 8-2 11-8z" fill="#fff3a6" opacity=".8"/><path d="M13 25c-2-10 0-14 3-12 4 3-4 10 1 9l8-8c3 0 0 6 4 6l5-3c3 2 4 5 8 5h18M12 35h48M12 48h25" fill="none" stroke="#dcbf5e" stroke-width="4"/></svg></a>
    <span class="divider"></span>
    <a class="app" href="#" aria-label="Trash"><svg viewBox="0 0 72 72"><path d="M6 4l6-6 8-3 8-1 7 4 7-5 8 5 10 1 7 6-4 10H10z" fill="#ececec"/><path d="M10 2l8 4 9-7 8 9-10 5zM44-2l4 8 10-3 5 7-14 3z" fill="#a9a9ab"/><path d="M5 5q2 6 31 7 29-1 31-7l-7 62q-2 8-24 8t-24-8z" fill="url(#g-can)"/><path d="M5 5q2 6 31 7 29-1 31-7" fill="none" stroke="#b9bcbf" stroke-width="1.300"/><path d="M13 64q4 6 23 6t23-6" fill="none" stroke="#9da2a5" stroke-width="1.500"/><path d="M10 2l8 8 6-4 4 6 8-2 6 2 8-7 6 5 7-4-3-7-8 4-8-8-8 8-9-5-9 2z" fill="#e4e4e4"/><path d="M22 4l6-1 3 4-6 2z" fill="#35c8d0"/><path d="M44 3l7 1-2 6-7-1z" fill="#a5603f"/><path d="M18 8l8 1 2 3-8-1zM36 4l4 6-6 1z" fill="#44484c"/></svg></a>
  </nav>
</footer>
</body>
</html>
```
FILE: styles.css
```css
* { box-sizing: border-box; }

body {
  margin: 0;
  min-height: 100vh;
  display: flex;
  flex-direction: column;
  overflow: hidden;
  font-family: Inter, "Liberation Sans", sans-serif;
  background: linear-gradient(90deg, #10052b, #08031a 12%, #0c0420 28%, #14052e 46%, #19003c 50%, #19003c 65%, #4b0069 65%, #45006a 74%, #2b0053 79%, #170038 86%, #150035);
}

button {
  margin: 0;
  padding: 0;
  border: 0;
  background: none;
  color: inherit;
  font: inherit;
}

svg { display: block; flex: none; }
.defs { position: absolute; width: 0; height: 0; }

/* Menu bar */
.menubar {
  display: flex;
  justify-content: space-between;
  align-items: center;
  height: 48px;
  padding: 0 38px;
  background: linear-gradient(90deg, #4e1192, #3a0da6 36%, #300a9f 70%, #2e0a98);
  color: #e9e5f5;
  font-size: 26px;
  line-height: 32px;
  text-shadow: 0 2px 4px rgba(0, 0, 0, .3);
}
.menus { display: flex; align-items: center; gap: 40px; }
.app-name { font-weight: 700; }
.apple svg { margin-top: -4px; }
.status { display: flex; align-items: center; gap: 30px; }
.clock { display: flex; gap: 22px; }

/* Windows */
.desktop {
  position: relative;
  flex: 1;
  display: flex;
  padding-top: 2px;
}
.back-window {
  position: absolute;
  inset: 40px 0 -24px;
  border-radius: 24px;
  background: linear-gradient(90deg, #c4959d, #7e5c63 14%, #5a4245 26%, #5a4245 82%, #7e5c63 90%, #c4959d);
}
.editor-window {
  position: absolute;
  left: 416px;
  right: 416px;
  bottom: -13px;
  padding-top: 1px;
  border: 1px solid #000;
  border-top: 0;
  border-radius: 0 0 20px 20px;
  background: #003655;
  box-shadow: inset 0 -2px #1b4660, 0 4px 24px rgba(0, 0, 0, .3);
  overflow: hidden;
}
.browser {
  position: relative;
  flex: 1;
  display: flex;
  flex-direction: column;
  overflow: hidden;
  border-radius: 20px;
  background: #35363a;
  box-shadow: 0 0 0 1px #000;
}
.browser::after {
  content: "";
  position: absolute;
  inset: 0;
  border: 2px solid rgba(255, 255, 255, .28);
  border-radius: 20px;
  pointer-events: none;
}

.icon-button {
  display: flex;
  align-items: center;
  justify-content: center;
  color: #f1f3f4;
}
.dim { color: #85868a; }
.soft { color: #c4c4c4; }

/* Tab strip */
.tabstrip {
  display: flex;
  height: 84px;
  padding: 16px 34px 0 42px;
  background: #202124;
}
.lights { display: flex; gap: 16px; padding-top: 15px; }
.light { width: 24px; height: 24px; border-radius: 50%; }
.close { background: #ff5f57; }
.minimise { background: #febc2e; }
.zoom { background: #1ac84b; }
.tab {
  position: relative;
  display: flex;
  align-items: center;
  width: 480px;
  margin-left: 40px;
  padding: 0 22px 0 26px;
  border-radius: 16px 16px 0 0;
  background: #35363a;
}
.tab::before,
.tab::after {
  content: "";
  position: absolute;
  bottom: 0;
  width: 16px;
  height: 16px;
}
.tab::before { right: 100%; background: radial-gradient(circle at 0 0, transparent 16px, #35363a 16px); }
.tab::after { left: 100%; background: radial-gradient(circle at 100% 0, transparent 16px, #35363a 16px); }
.tab-title {
  flex: 1;
  margin: 0 8px 0 18px;
  overflow: hidden;
  white-space: nowrap;
  color: #fff;
  font-size: 24px;
  line-height: 32px;
  -webkit-mask-image: linear-gradient(90deg, #000 86%, transparent);
  mask-image: linear-gradient(90deg, #000 86%, transparent);
}
.new-tab { margin-left: 32px; }
.tab-search { margin-left: auto; }

/* Toolbar */
.toolbar {
  display: flex;
  align-items: center;
  height: 74px;
  padding: 0 16px 0 24px;
  border-bottom: 2px solid #5f6164;
}
.nav-buttons { display: flex; gap: 26px; }
.omnibox {
  flex: 1;
  display: flex;
  align-items: center;
  gap: 32px;
  height: 56px;
  margin-left: 26px;
  padding: 0 18px 0 19px;
  border-radius: 28px;
  background: #202124;
  font-size: 28px;
  line-height: 32px;
}
.scheme {
  margin-left: -18px;
  padding-right: 14px;
  border-right: 2px solid #5f6368;
  color: #9aa0a6;
}
.url {
  flex: 1;
  margin-left: -14px;
  padding: 0;
  border: 0;
  outline: 0;
  background: none;
  color: #fff;
  font: inherit;
}
.extensions { display: flex; align-items: center; gap: 33px; margin-left: 27px; }
.extension { position: relative; }
.ext-count {
  position: absolute;
  left: 20px;
  top: 18px;
  width: 24px;
  height: 24px;
  border-radius: 4px;
  background: #8ab4f8;
  color: #202124;
  font-size: 18px;
  line-height: 24px;
}
.avatar {
  width: 44px;
  height: 44px;
  margin: 0 14px 0 28px;
  border-radius: 50%;
  background: #0288d1;
  color: #fff;
  font-size: 24px;
}
.update {
  display: flex;
  align-items: center;
  justify-content: space-between;
  width: 176px;
  height: 56px;
  padding: 0 24px;
  border: 2px solid #81c995;
  border-radius: 28px;
  background: #3b4442;
  color: #81c995;
  font-size: 26px;
}

/* Quiz page */
.page {
  flex: 1;
  display: grid;
  place-items: center;
  background: #ffc0cb;
}
.start {
  padding: 30px 60px;
  border-radius: 10px;
  background: #fff;
  color: #007bff;
  font-family: "Liberation Sans", Arial, sans-serif;
  font-size: 50px;
  line-height: 58px;
  box-shadow: 0 8px 16px rgba(0, 0, 0, .2), 0 12px 40px rgba(0, 0, 0, .19);
}

/* Dock */
.dock-area {
  position: relative;
  display: flex;
  justify-content: center;
  padding: 24px 0 10px;
}
.dock {
  display: flex;
  gap: 20px;
  height: 110px;
  padding: 14px;
  border: 2px solid rgba(255, 255, 255, .17);
  border-radius: 32px;
  background: linear-gradient(90deg, #241335, #1f1130 30%, #261148 58%, #46115c 66%, #4e1269 76%, #3f1259 82%, #26114a 88%, #241042);
  background-origin: border-box;
  box-shadow: 0 0 56px rgba(0, 0, 0, .3);
}
.app { position: relative; width: 72px; height: 72px; }
.app svg { width: 72px; height: 72px; overflow: visible; }
.running::after {
  content: "";
  position: absolute;
  left: 32px;
  top: 82px;
  width: 8px;
  height: 8px;
  border-radius: 50%;
  background: #a78cc0;
}
.badge {
  position: absolute;
  left: 48px;
  top: -8px;
  width: 34px;
  height: 34px;
  border-radius: 50%;
  background: #f03a32;
  color: #fff;
  font-size: 20px;
  line-height: 34px;
  text-align: center;
}
.divider {
  width: 2px;
  height: 82px;
  margin: -2px 10px 0;
  background: rgba(200, 170, 230, .4);
}
.petals rect { mix-blend-mode: multiply; opacity: .9; }
.cal-month { fill: #fff; font-size: 14px; font-weight: 600; text-anchor: middle; }
.cal-day { fill: #2a2a2a; font-size: 44px; font-weight: 300; text-anchor: middle; }
.tv { fill: #fff; font-size: 30px; font-weight: 500; }
.pages { fill: #fff; font-size: 9px; }
.prompt { fill: #fff; font-family: "DejaVu Sans Mono", monospace; font-size: 18px; font-weight: 700; }
```
